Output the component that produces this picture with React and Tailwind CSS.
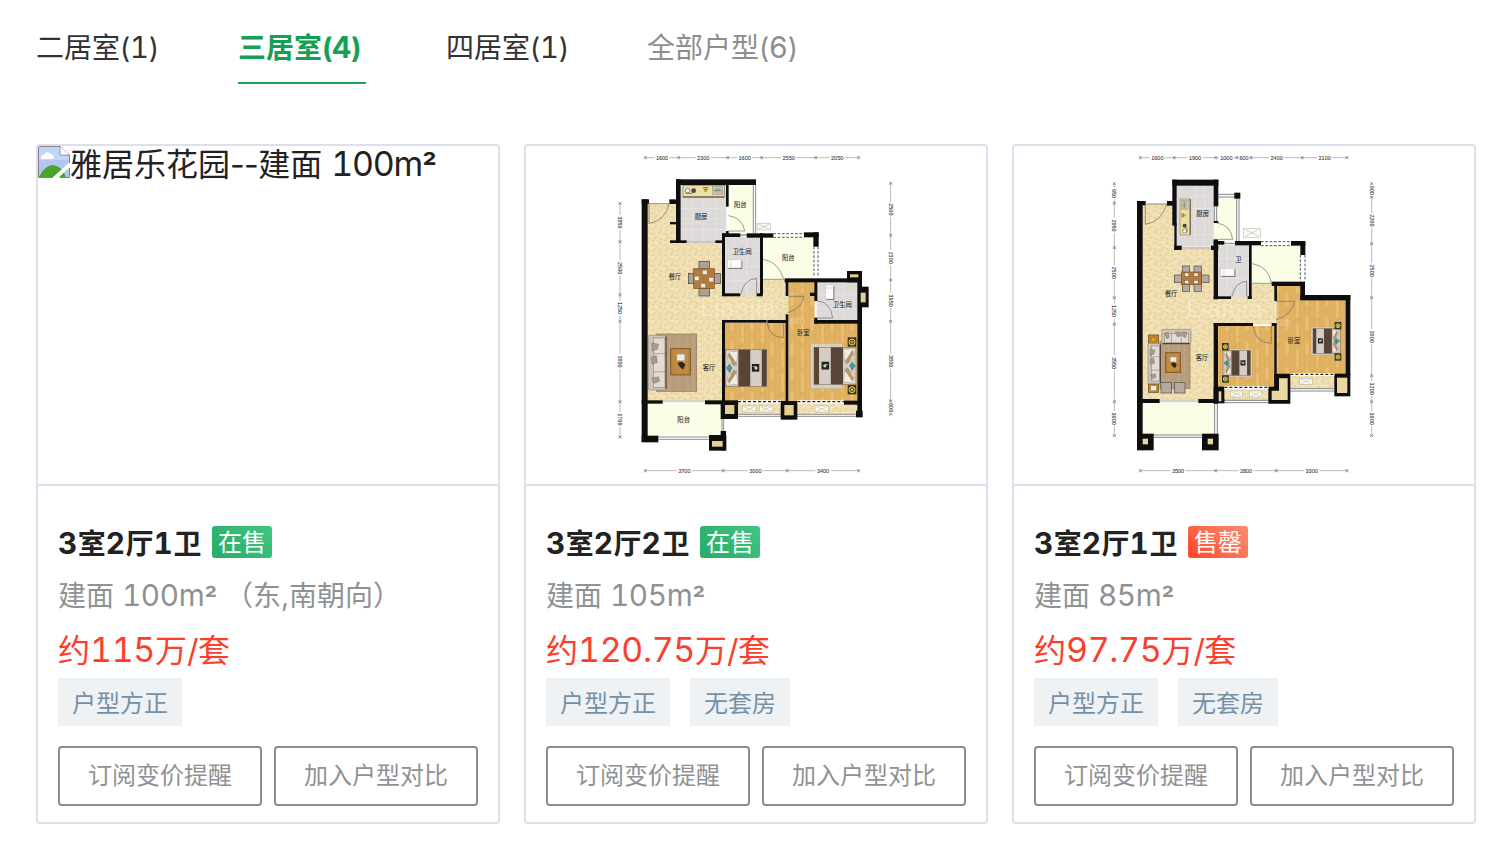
import React from 'react';

const INK = '#0e0e0e';
const TILE = '#dedada';
const PALE = '#fbfee6';
const CREAM = 'url(#cream)';
const WOOD = 'url(#wood)';

// Digits are set a little larger than the Chinese glyphs, with even widths;
// the superscript is heavier and hangs lower than the font's own.
function Mixed({ children, digits = 'tracking-[-0.01em]' }) {
  return children.split(/([0-9.]+m?|[/()-]+|²)/).map((part, i) => {
    if (i % 2 === 0) return part;
    if (part === '²') return <span key={i} className="align-[-0.1em] text-[1em] leading-[0] font-semibold">{part}</span>;
    if (/[0-9]/.test(part)) return <span key={i} className={`text-[1.06em] leading-[0] tabular-nums ${digits}`}>{part}</span>;
    return <span key={i} className="leading-[0] tracking-[-0.02em]">{part}</span>;
  });
}

function Rects({ list, fill = INK, ...rest }) {
  return list.map(([x, y, w, h], i) => (
    <rect key={i} x={x} y={y} width={w} height={h} fill={fill} {...rest} />
  ));
}

function Ruler({ at, ticks, labels, vertical }) {
  return (
    <g transform={vertical ? `translate(${at} 0) rotate(90)` : `translate(0 ${at})`}>
      {labels.map((label, i) => {
        const a = ticks[i];
        const b = ticks[i + 1];
        const mid = (a + b) / 2;
        const half = label.length * 4.9 + 3;
        return (
          <g key={i}>
            <path d={`M${a} 0H${Math.max(a, mid - half)}M${Math.min(b, mid + half)} 0H${b}`} stroke="#999" strokeWidth="2" />
            <text x={mid} y="6" textAnchor="middle" fontSize="16.5" fill="#444" stroke="#444" strokeWidth=".3">{label}</text>
          </g>
        );
      })}
      {ticks.map((t) => (
        <path key={t} d={`M${t - 4} -5L${t + 4} 5M${t - 4} 5L${t + 4} -5`} stroke="#555" strokeWidth="1.8" />
      ))}
    </g>
  );
}

function Rooms({ labels }) {
  return labels.map(([x, y, name], i) => (
    <text key={i} x={x} y={y} textAnchor="middle" fontSize="19" fill="#333" stroke="#333" strokeWidth=".3">{name}</text>
  ));
}

function Crate({ x, y, w = 40, h = 18 }) {
  return (
    <g stroke="#aaa79c" strokeWidth="1.4" fill="#fbfaf3">
      <rect x={x} y={y} width={w} height={h} />
      <path d={`M${x + 5} ${y + 3}L${x + w - 5} ${y + h - 3}M${x + w - 5} ${y + 3}L${x + 5} ${y + h - 3}`} />
    </g>
  );
}

function Lamp({ x, y, r = 9 }) {
  return (
    <g>
      <rect x={x - r - 4} y={y - r - 5} width={r * 2 + 8} height={r * 2 + 10} fill="#3b3222" />
      <circle cx={x} cy={y} r={r} fill="#6b6420" stroke="#d8d34f" strokeWidth="3" />
      <circle cx={x} cy={y} r="2.5" fill="#f2f0a0" />
    </g>
  );
}

// Bed drawn with its pillows on the left; flip mirrors it about its own box.
function Bed({ x, y, w, h, flip }) {
  return (
    <g transform={flip ? `translate(${x + w} ${y}) scale(-1 1)` : `translate(${x} ${y})`}>
      <rect width={w} height={h} fill="#d6cec6" stroke="#6b6058" strokeWidth="1.5" />
      <path d={`M2 3L${w * 0.3} ${h * 0.06}L${w * 0.26} ${h * 0.45}L8 ${h * 0.3}ZM2 ${h - 3}L${w * 0.3} ${h * 0.94}L${w * 0.26} ${h * 0.57}L8 ${h * 0.7}Z`} fill="#f0ebe5" stroke="#8e8276" strokeWidth="1.2" />
      <path d={`M10 ${h * 0.08}L${w * 0.26} ${h * 0.38}L${w * 0.2} ${h * 0.44}L8 ${h * 0.18}ZM10 ${h * 0.92}L${w * 0.26} ${h * 0.62}L${w * 0.2} ${h * 0.56}L8 ${h * 0.82}Z`} fill="#b99863" stroke="#6e5836" />
      <path d={`M1 ${h * 0.5}L12 ${h * 0.38}L20 ${h * 0.5}L12 ${h * 0.64}Z`} fill="#4f9097" />
      <rect x={w * 0.31} width={w * 0.29} height={h} fill="#574635" />
      <rect x={w * 0.88} width={w * 0.12} height={h} fill="#574635" />
      <rect x={w * 0.64} y={h * 0.39} width={w * 0.18} height={h * 0.21} fill="#202220" />
      <circle cx={w * 0.74} cy={h * 0.5} r={w * 0.04} fill="#c8dc7c" />
      <path d={`M${w * 0.67} ${h * 0.46}h${w * 0.06}`} stroke="#eee" strokeWidth="2" />
    </g>
  );
}

function Sofa({ x, y, w, h }) {
  const third = h / 3;
  return (
    <g transform={`translate(${x} ${y})`} stroke="#84786c" strokeWidth="1.6">
      <rect width={w} height={h} rx="4" fill="#cfc4b9" />
      <rect x={w * 0.28} y="8" width={w * 0.66} height={h - 16} fill="#e3dbd3" />
      <path d={`M${w * 0.28} ${third}H${w}M${w * 0.28} ${third * 2}H${w}`} />
      <path d={`M${w * 0.2} ${h * 0.14}l${w * 0.38} 4l-4 ${h * 0.09}l-${w * 0.3} 5zM${w * 0.15} ${h * 0.4}l${w * 0.3} -5l3 ${h * 0.13}l-${w * 0.3} 5zM${w * 0.2} ${h * 0.78}l${w * 0.38} -3l3 ${h * 0.08}l-${w * 0.35} 6z`} fill="#a79b90" />
      <path d={`M${w} 3V${h - 3}`} stroke="#3f3730" strokeWidth="3" />
    </g>
  );
}

function CoffeeTable({ x, y, w, h }) {
  return (
    <g>
      <rect x={x} y={y} width={w} height={h} fill="#b27a35" stroke="#72501f" strokeWidth="2" />
      <rect x={x + 5} y={y + 4} width={w - 10} height={h - 8} fill="#c18b45" />
      <rect x={x + w * 0.32} y={y + h * 0.22} width={w * 0.4} height={h * 0.24} fill="#f0ede6" stroke="#999" />
      <path d={`M${x + w * 0.35} ${y + h * 0.55}l${w * 0.2} -4l${w * 0.2} ${h * 0.1}l-${w * 0.12} ${h * 0.2}l-${w * 0.16} -${h * 0.1}z`} fill="#2c2520" />
    </g>
  );
}

function Basin({ x, y, w = 42, h = 25 }) {
  return (
    <g>
      <rect x={x + 3} y={y + 3} width={w} height={h} fill="#77716e" />
      <rect x={x} y={y} width={w} height={h} fill="#fcfcfb" stroke="#aaa" />
      <path d={w > h ? `M${x + 10} ${y}v${h}` : `M${x} ${y + 9}h${w}`} stroke="#b8b8b8" strokeWidth="1.5" />
    </g>
  );
}

function Counter({ transform }) {
  return (
    <g transform={transform}>
      <rect width="124" height="35" fill="#eedf9e" stroke="#86795b" strokeWidth="2" />
      <path d="M0 35H124" stroke="#4c4232" strokeWidth="3" />
      <circle cx="14" cy="16" r="7" fill="#f7f7f7" stroke="#555" strokeWidth="2" />
      <circle cx="32" cy="16" r="7" fill="#454545" />
      <path d="M8 24H28" stroke="#555" strokeWidth="2" />
      <path d="M60 7h16M62 12h12M64 17h8" stroke="#8a6b26" strokeWidth="3" />
      <rect x="88" y="4" width="32" height="24" fill="#c4c0bc" stroke="#7d7975" />
      <path d="M92 15h24M104 8v14M98 11v8M110 11v8" stroke="#6f6b67" strokeWidth="1.5" />
    </g>
  );
}

function Patterns() {
  return (
    <defs>
      <pattern id="cream" width="36" height="32" patternUnits="userSpaceOnUse">
        <rect width="36" height="32" fill="#efdfb3" />
        <path d="M2 8l9-5M16 13l10-4M4 24l8 4M24 25l9-6M19 29l5 2" stroke="#e8cd8c" strokeWidth="3" />
        <path d="M14 4l7 3M27 3l6 5M3 15l7 3M15 21l6-4" stroke="#f5e9c8" strokeWidth="3" />
      </pattern>
      <pattern id="wood" width="60" height="74" patternUnits="userSpaceOnUse">
        <rect width="60" height="74" fill="#e2b263" />
        <path d="M6 0V40M37 20V74" stroke="#e9be74" strokeWidth="10" />
        <path d="M15 0V74M30 0V74M45 0V74M60 0V74" stroke="#d6a555" strokeWidth="1.4" />
        <path d="M0 40H15M15 12H30M30 58H45M45 28H60" stroke="#d6a555" strokeWidth="1.4" />
      </pattern>
    </defs>
  );
}

function Watermark({ x, y }) {
  return (
    <g fill="#fff" fillOpacity=".3">
      <text x={x} y={y} fontSize="72" letterSpacing="3">Lianjia</text>
      <text x={x + 245} y={y + 26} fontSize="32">.com</text>
    </g>
  );
}

function PlanLarge() {
  return (
    <svg viewBox="-252 3 1380 1014" className="block h-[338px] w-[460px] font-['Liberation_Sans','Noto_Sans_CJK_SC',sans-serif]">
      <Patterns />
      <Ruler at={38} ticks={[106, 206, 353, 455, 617, 746]} labels={['1600', '2300', '1600', '2550', '2050']} />
      <Ruler at={977} ticks={[106, 340, 532, 746]} labels={['3700', '3000', '3400']} />
      <Ruler vertical at={30} ticks={[175, 290, 449, 529, 770, 876]} labels={['1850', '2500', '1250', '3800', '1700']} />
      <Ruler vertical at={842} ticks={[115, 271, 405, 529, 768, 808]} labels={['2500', '2100', '1950', '3800', '600']} />

      <path d="M112 175H205V290H340V445H455V403H535V529H340V770H112Z" fill={CREAM} />
      <path d="M345 533H530V770H345ZM535 408H614V529H742V770H535Z" fill={WOOD} />
      <Rects fill={TILE} list={[[213, 120, 136, 168], [345, 276, 105, 172], [620, 411, 122, 115]]} />
      <path d="M248 120V288M282 120V288M316 120V288M213 190H348M213 222H348M213 254H348M372 277V445M410 277V445M345 318H450M345 365H450M345 408H450M660 412V525M700 412V525M620 450H742M620 490H742" stroke="#ebe8e8" strokeWidth="2" />
      <Rects fill={PALE} list={[[357, 120, 74, 146], [459, 278, 153, 125], [112, 776, 226, 98]]} />
      <Rects fill={CREAM} list={[[380, 776, 366, 34]]} />
      <Watermark x={270} y={512} />

      <g fill="none" stroke="#8d9196" strokeWidth="3">
        <path d="M430 120V265M437 120V265M145 876H300M145 883H300M336 820V860M341 820V860M384 808H740M384 814H740M748 778V800" />
        <path d="M230 291H316" stroke="#c9c4bd" strokeWidth="6" />
        <path d="M158 769H285" stroke="#d5d2c6" strokeWidth="6" />
        <path d="M391 270H410" strokeWidth="5" />
      </g>
      <Rects
        list={[
          [95, 163, 18, 728], [95, 163, 22, 13], [178, 163, 30, 14], [198, 103, 240, 17], [198, 103, 14, 190],
          [180, 231, 22, 7], [180, 286, 50, 8], [316, 286, 28, 8], [348, 118, 8, 67], [348, 258, 8, 15],
          [336, 265, 55, 11], [410, 265, 80, 13], [336, 265, 9, 188], [336, 445, 55, 9], [440, 445, 18, 9],
          [450, 265, 9, 185], [582, 262, 44, 15], [610, 262, 16, 43], [524, 400, 232, 12], [711, 378, 45, 34],
          [742, 408, 14, 400], [752, 425, 24, 62], [613, 410, 9, 58], [600, 443, 15, 10], [613, 518, 9, 18],
          [613, 525, 140, 11], [527, 405, 8, 48], [527, 508, 8, 290], [336, 525, 9, 260], [336, 525, 134, 8],
          [472, 525, 60, 9], [95, 766, 63, 10], [285, 766, 100, 12], [332, 768, 52, 54], [512, 768, 50, 56],
          [702, 767, 52, 12], [738, 797, 20, 20], [95, 872, 50, 20], [297, 870, 52, 47], [332, 858, 16, 58],
        ]}
      />
      <Rects fill="#e6cf93" list={[[720, 388, 25, 9], [752, 443, 15, 29], [345, 780, 28, 27], [523, 780, 28, 31], [306, 888, 32, 17]]} />
      <g stroke="#fff" strokeWidth="8">
        <path d="M384 770H512M562 770H702" />
        <path d="M384 770H512M562 770H702" stroke="#222" strokeWidth="4" strokeDasharray="9 6" />
      </g>
      <g fill="none" stroke="#333" strokeWidth="2.5" strokeDasharray="8 5">
        <path d="M490 266H582M490 277H582M612 305V396M624 305V396" />
      </g>
      <g fill="none" stroke="#6c6b66" strokeWidth="2">
        <path d="M117 175V236Q168 226 177 176M117 176H177M355 212Q398 218 404 258H355M460 343Q506 350 521 403H460M393 446Q402 403 440 400V446M535 454H581Q578 488 535 503M472 533Q476 577 520 578V533M622 468Q662 470 668 519H622" />
      </g>
      <Crate x={442} y={235} h={20} />
      <Crate x={398} y={783} />
      <Crate x={448} y={783} />
      <Crate x={615} y={783} />

      <Counter transform="translate(219 121)" />
      <Basin x={352} y={344} />
      <Basin x={647} y={420} w={23} h={42} />
      <rect x="140" y="567" width="120" height="172" fill="#b79d7c" stroke="#927956" strokeWidth="2" />
      <path d="M180 570V736M205 570V736M230 570V736M250 570V736" stroke="#c5ae8e" strokeWidth="2" />
      <Sofa x={115} y={571} w={53} h={164} />
      <CoffeeTable x={182} y={610} w={59} h={80} />
      <g fill="#aaa19b" stroke="#403b38" strokeWidth="2">
        <rect x="267" y="349" width="31" height="24" />
        <rect x="267" y="430" width="31" height="23" />
        <rect x="235" y="385" width="22" height="31" />
        <rect x="309" y="385" width="22" height="31" />
      </g>
      <rect x="251" y="371" width="62" height="60" fill="#b27a3c" stroke="#7c5223" strokeWidth="2" />
      <path d="M282 372V431" stroke="#8e5c27" />
      <Rects fill="#f4eee6" list={[[278, 376, 13, 12], [254, 394, 13, 12], [297, 398, 13, 12], [273, 416, 13, 12]]} stroke="#8c7a66" />
      <Bed x={347} y={614} w={123} h={110} />
      <rect x="602" y="595" width="95" height="136" fill="#d9cfc1" stroke="#b19c7b" />
      <Bed x={612} y={607} w={126} h={111} flip />
      <Lamp x={726} y={591} />
      <Lamp x={726} y={734} />
      <Rooms
        labels={[
          [391, 187, '阳台'], [273, 223, '厨房'], [396, 326, '卫生间'], [195, 401, '餐厅'], [297, 676, '客厅'],
          [221, 831, '阳台'], [535, 345, '阳台'], [697, 485, '卫生间'], [580, 571, '卧室'],
        ]}
      />
    </svg>
  );
}

function PlanSmall() {
  return (
    <svg viewBox="-273 3 1380 1014" className="block h-[338px] w-[460px] font-['Liberation_Sans','Noto_Sans_CJK_SC',sans-serif]">
      <Ruler at={38} ticks={[106, 208, 332, 396, 438, 592, 726]} labels={['1600', '1900', '1000', '600', '2400', '2100']} />
      <Ruler at={977} ticks={[106, 332, 514, 726]} labels={['3500', '2800', '3300']} />
      <Ruler vertical at={28} ticks={[116, 175, 308, 458, 538, 770, 872]} labels={['950', '2050', '2500', '1250', '3550', '1600']} />
      <Ruler vertical at={800} ticks={[116, 156, 296, 458, 692, 770, 872]} labels={['600', '2200', '2500', '3600', '1200', '1600']} />

      <path d="M112 175H208V308H330V457H440V415H512V538H330V765H112Z" fill={CREAM} />
      <path d="M338 543H510V727H338ZM514 422H588V465H724V688H514Z" fill={WOOD} />
      <Rects fill={TILE} list={[[214, 120, 114, 184], [339, 299, 94, 158]]} />
      <path d="M270 120V302M300 120V302M260 155H328M260 190H328M214 270H328M366 300V457M398 300V457M340 340H432M340 400H432" stroke="#ebe8e8" strokeWidth="2" />
      <Rects fill={PALE} list={[[326, 184, 16, 48], [326, 232, 16, 52], [340, 156, 58, 133], [440, 301, 146, 114], [112, 773, 218, 99]]} />
      <Rects fill={CREAM} list={[[356, 733, 136, 34], [556, 692, 134, 40]]} />
      <Watermark x={245} y={516} />

      <g fill="none" stroke="#80858a" strokeWidth="3">
        <path d="M340 148H390M340 156H390M395 160V288M402 160V288M112 870H291M112 877H291M329 774V866M337 774V866M358 766H490M358 773H490M556 731H688M556 738H688M328 184V232M335 184V232M358 295H390" />
        <path d="M230 309H318" stroke="#c9c4bd" strokeWidth="7" />
        <path d="M164 768H280" stroke="#d5d2c6" strokeWidth="7" />
      </g>
      <Rects
        list={[
          [96, 168, 17, 705], [96, 168, 26, 13], [186, 168, 18, 14], [202, 104, 138, 18], [202, 104, 13, 138],
          [208, 235, 7, 80], [208, 302, 22, 13], [318, 302, 22, 13], [326, 104, 14, 80], [326, 228, 14, 6],
          [326, 283, 13, 180], [388, 143, 18, 18], [326, 288, 32, 11], [390, 288, 78, 13], [432, 300, 8, 162],
          [326, 454, 52, 8], [428, 454, 12, 8], [558, 288, 43, 14], [586, 288, 15, 42], [500, 410, 100, 13],
          [586, 416, 14, 48], [508, 420, 8, 48], [586, 450, 150, 16], [722, 450, 14, 240], [688, 686, 48, 68],
          [508, 536, 7, 190], [326, 534, 118, 9], [500, 534, 15, 9], [326, 534, 13, 242], [326, 725, 32, 50],
          [96, 762, 68, 12], [280, 762, 78, 12], [96, 866, 50, 50], [291, 866, 50, 50],
        ]}
      />
      <path d="M508 686H556V776H490V725H508Z" fill={INK} />
      <path d="M522 700H548V765H500V737H522Z" fill="#ead69f" />
      <Rects fill="#ead69f" list={[[696, 698, 31, 46], [341, 739, 8, 30], [113, 881, 16, 17], [308, 881, 16, 17]]} />
      <g stroke="#fff" strokeWidth="8">
        <path d="M358 727H490M556 688H688" />
        <path d="M358 727H490M556 688H688" stroke="#222" strokeWidth="4" strokeDasharray="9 6" />
      </g>
      <g fill="none" stroke="#333" strokeWidth="2.5" strokeDasharray="8 5">
        <path d="M468 290H558M468 302H558M586 330V410M600 330V410" />
      </g>
      <g fill="none" stroke="#6c6b66" strokeWidth="2">
        <path d="M121 180V238Q170 230 185 177M121 177H186M335 234Q378 240 383 283H340M442 356Q490 364 500 415H442M380 455Q390 410 425 409V455M512 469H569Q562 508 512 525M444 543Q450 594 499 595V543" />
      </g>
      <Crate x={415} y={250} w={52} h={27} />
      <Crate x={377} y={738} w={36} />
      <Crate x={434} y={738} w={36} />
      <Crate x={584} y={700} w={38} />

      <Counter transform="translate(225 270) rotate(-90) scale(.87 .87)" />
      <Basin x={347} y={370} w={41} h={23} />
      <rect x="165" y="590" width="90" height="140" fill="#b79d7c" stroke="#927956" strokeWidth="2" />
      <path d="M190 594V726M220 594V726M240 594V726" stroke="#c5ae8e" strokeWidth="2" />
      <rect x="130" y="570" width="31" height="28" fill="#bd8b38" stroke="#5f451d" strokeWidth="2" />
      <circle cx="145" cy="584" r="8" fill="#dda02e" stroke="#936111" strokeWidth="2" />
      <rect x="130" y="717" width="31" height="25" fill="#bd8b38" stroke="#5f451d" strokeWidth="2" />
      <rect x="138" y="723" width="15" height="13" fill="#f3eee5" />
      <Sofa x={129} y={595} w={37} h={121} />
      <g transform="translate(258 553) rotate(90)">
        <Sofa x={0} y={0} w={43} h={88} />
      </g>
      <CoffeeTable x={181} y={623} w={46} h={60} />
      <g fill="#b3aaa4" stroke="#4e4844" strokeWidth="2">
        <rect x="168" y="713" width="32" height="31" />
        <rect x="208" y="713" width="32" height="31" />
        <rect x="232" y="363" width="22" height="23" />
        <rect x="267" y="363" width="22" height="23" />
        <rect x="232" y="416" width="22" height="23" />
        <rect x="267" y="416" width="22" height="23" />
        <rect x="208" y="390" width="24" height="23" />
        <rect x="288" y="390" width="24" height="23" />
      </g>
      <rect x="229" y="381" width="61" height="38" fill="#b27a3c" stroke="#7c5223" strokeWidth="2" />
      <Rects fill="#f4eee6" list={[[239, 384, 12, 10], [267, 384, 12, 10], [239, 406, 12, 10], [267, 406, 12, 10]]} stroke="#4c3520" />
      <rect x="375" y="612" width="66" height="84" fill="#d9cfc1" stroke="#b19c7b" />
      <Bed x={354} y={617} w={82} h={74} />
      <Lamp x={361} y={605} r={6} />
      <Lamp x={361} y={702} r={6} />
      <rect x="618" y="546" width="66" height="84" fill="#d9cfc1" stroke="#b19c7b" />
      <Bed x={624} y={551} w={82} h={74} flip />
      <Lamp x={699} y={542} r={6} />
      <Lamp x={699} y={636} r={6} />
      <Rooms labels={[[293, 213, '厨房'], [400, 350, '卫'], [199, 453, '餐厅'], [291, 645, '客厅'], [567, 595, '卧室']]} />
    </svg>
  );
}

function MissingPicture() {
  return (
    <div className="flex h-[338px] items-start text-[32px] leading-[38px] text-[#222]">
      <svg viewBox="0 0 32 32" className="h-8 w-8 shrink-0">
        <path d="M.5 .5H22L31.500 9V31.500H.5Z" fill="#c3d5f7" />
        <path d="M.5 14H31V31H.5Z" fill="#b4c6ef" />
        <path d="M3.500 13a2.500 2.500 0 0 1 2-4a4 4 0 0 1 7-1a3.500 3.500 0 0 1 3 5Z" fill="#fff" />
        <path d="M1 31Q7 19 15 19Q24 20 28 31Z" fill="#4aa52b" />
        <path d="M14 32L32 16V21L20 32Z" fill="#fff" />
        <path d="M22 0H32V9Z" fill="#fff" />
        <path d="M15 31.500H.5V.5H22L31.500 9V17M31.500 22V31.500H22M22 .5V9H31.500" fill="none" stroke="#858585" />
        <path d="M22.500 1V8.500H31Z" fill="#fff" />
      </svg>
      <span className="whitespace-nowrap"><Mixed digits="tracking-[-0.035em]">雅居乐花园--建面 100m²</Mixed></span>
    </div>
  );
}

const tabs = [
  { label: '二居室(1)', style: 'w-[122px] text-[#333]' },
  { label: '三居室(4)', style: 'w-32 border-b-2 border-[#19a15f] font-bold text-[#16a055]' },
  { label: '四居室(1)', style: 'w-[121px] text-[#333]' },
  { label: '全部户型(6)', style: 'text-[#8e8e8e]' },
];

const homes = [
  { picture: <MissingPicture />, title: '3室2厅1卫', status: '在售', area: '建面 100m² （东,南朝向）', price: '约115万/套', tags: ['户型方正'] },
  { picture: <PlanLarge />, title: '3室2厅2卫', status: '在售', area: '建面 105m²', price: '约120.75万/套', tags: ['户型方正', '无套房'] },
  { picture: <PlanSmall />, title: '3室2厅1卫', status: '售罄', area: '建面 85m²', price: '约97.75万/套', tags: ['户型方正', '无套房'] },
];

function HomeCard({ home }) {
  const badge = home.status === '在售' ? 'from-[#29ab68] to-[#40c583]' : 'from-[#fc4420] to-[#f98c74]';
  return (
    <article className="h-[680px] w-[464px] overflow-hidden rounded-[4px] border-2 border-[#dddfec]">
      <div className="h-[340px] border-b-2 border-[#dddfec]">{home.picture}</div>
      <div className="px-5 pt-[38px] whitespace-nowrap">
        <div className="flex h-9 items-center">
          <h3 className="h-9 w-36 text-[28px] leading-[40px] font-bold text-[#222]"><Mixed digits="tracking-[0.02em]">{home.title}</Mixed></h3>
          <span className={`ml-2.5 h-8 w-[60px] rounded-[3px] bg-linear-45 text-center text-2xl leading-[33px] text-white ${badge}`}>{home.status}</span>
        </div>
        <p className="mt-[15px] h-10 text-[28px] leading-[42px] text-[#8f9294]"><Mixed>{home.area}</Mixed></p>
        <p className="mt-3 h-11 text-[32px] leading-[47px] text-[#fa3f2d]"><Mixed>{home.price}</Mixed></p>
        <div className="mt-[7px] flex gap-5">
          {home.tags.map((tag) => (
            <span key={tag} className="h-12 bg-[#eef2f5] px-3.5 text-2xl leading-[51px] text-[#7690a6]">{tag}</span>
          ))}
        </div>
        <div className="mt-5 flex gap-3">
          {['订阅变价提醒', '加入户型对比'].map((label) => (
            <button key={label} className="h-[60px] w-[204px] rounded-[4px] border-2 border-[#8b8e91] text-2xl leading-[56px] text-[#8f9294]">{label}</button>
          ))}
        </div>
      </div>
    </article>
  );
}

export default function App() {
  return (
    <main className="h-[854px] w-[1498px] overflow-hidden bg-white pl-9 font-['Inter','Noto_Sans_CJK_SC',sans-serif]">
      <nav className="flex h-21 gap-20 text-[28px] leading-[97px] whitespace-nowrap">
        {tabs.map((tab) => (
          <div key={tab.label} className={`h-21 ${tab.style}`}><Mixed>{tab.label}</Mixed></div>
        ))}
      </nav>
      <section className="mt-15 flex gap-6">
        {homes.map((home, i) => <HomeCard key={i} home={home} />)}
      </section>
    </main>
  );
}
